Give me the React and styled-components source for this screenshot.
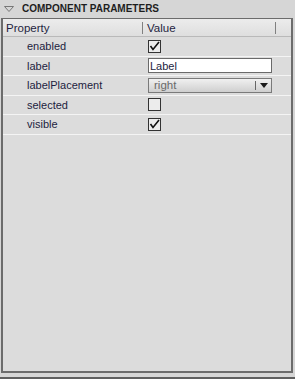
import React from "react";
import styled, { createGlobalStyle } from "styled-components";

const Global = createGlobalStyle`
  html, body {
    margin: 0;
    padding: 0;
    background: #d3d3d3;
  }
  body {
    font-family: "Liberation Sans", Arial, sans-serif;
  }
`;

const Frame = styled.div`
  width: 295px;
  height: 379px;
  box-sizing: border-box;
  background: #d6d6d6;
  border-bottom: 2px solid #5f5f5f;
  display: flex;
  flex-direction: column;
`;

const TitleBar = styled.div`
  height: 17px;
  display: flex;
  align-items: center;
  gap: 8px;
  padding-left: 4px;
  font-size: 10px;
  font-weight: bold;
  color: #1e1e1e;
`;

const Panel = styled.div`
  flex: 1;
  margin: 1px 2px 4px 1px;
  border: 2px solid #6c6c6c;
  border-top-width: 1px;
  background: #dcdcdc;
`;

const HeaderRow = styled.div`
  height: 17px;
  display: flex;
  align-items: center;
  background: linear-gradient(#ececec, #dedede);
  border-bottom: 1px solid #b9b9b9;
  font-size: 11.5px;
  color: #1f1f3f;
`;

const HeadCell = styled.div`
  width: ${(p) => p.$w}px;
  padding-left: ${(p) => p.$pad}px;
  box-sizing: border-box;
  display: flex;
  align-items: center;
  border-right: ${(p) => (p.$sep ? "1px solid #808080" : "none")};
  height: 12px;
`;

const Row = styled.div`
  height: 19.5px;
  box-sizing: border-box;
  display: flex;
  align-items: center;
  border-bottom: 1px solid #f4f4f4;
  font-size: 11px;
  color: #1d1d40;
`;

const Name = styled.div`
  width: 145px;
  padding-left: 24px;
  box-sizing: border-box;
`;

const Value = styled.div`
  flex: 1;
  padding-right: 19px;
  display: flex;
  align-items: center;
`;

const Check = styled.div`
  width: 11px;
  height: 11px;
  border: 1px solid #333;
  background: #ececec;
  display: flex;
  align-items: center;
  justify-content: center;
`;

const TextField = styled.div`
  flex: 1;
  height: 15px;
  box-sizing: border-box;
  border: 1px solid #6a6a6a;
  background: #fff;
  font-size: 11px;
  color: #1d1d40;
  padding-left: 1px;
  display: flex;
  align-items: center;
`;

const Dropdown = styled.div`
  flex: 1;
  height: 15px;
  box-sizing: border-box;
  border: 1px solid #7a7a7a;
  background: linear-gradient(#f0f0f0, #cfcfcf);
  font-size: 11.5px;
  color: #6a6a6a;
  display: flex;
  align-items: center;
  padding-left: 5px;
`;

const DropLabel = styled.span`
  flex: 1;
`;

const DropSep = styled.span`
  width: 1px;
  height: 9px;
  background: #666;
  margin-right: 4px;
`;

const Arrow = styled.span`
  width: 0;
  height: 0;
  border-left: 4px solid transparent;
  border-right: 4px solid transparent;
  border-top: 5px solid #1a1a1a;
  margin-right: 3px;
`;

const Tick = () => (
  <svg width="11" height="11" viewBox="0 0 11 11">
    <path d="M1.5 5 L4 8.5 L10 1" fill="none" stroke="#111" strokeWidth="1.6" />
  </svg>
);

const Collapse = () => (
  <svg width="10" height="8" viewBox="0 0 10 8">
    <path d="M0.5 1.5 L9.5 1.5 L5 6.5 Z" fill="none" stroke="#777" strokeWidth="1" />
  </svg>
);

const params = [
  { name: "enabled", kind: "check", on: true },
  { name: "label", kind: "text", value: "Label" },
  { name: "labelPlacement", kind: "select", value: "right" },
  { name: "selected", kind: "check", on: false },
  { name: "visible", kind: "check", on: true },
];

const renderValue = (p) => {
  if (p.kind === "check") return <Check>{p.on && <Tick />}</Check>;
  if (p.kind === "text") return <TextField>{p.value}</TextField>;
  return (
    <Dropdown>
      <DropLabel>{p.value}</DropLabel>
      <DropSep />
      <Arrow />
    </Dropdown>
  );
};

export default function App() {
  return (
    <>
      <Global />
      <Frame>
        <TitleBar>
          <Collapse />
          COMPONENT PARAMETERS
        </TitleBar>
        <Panel>
          <HeaderRow>
            <HeadCell $w={140} $pad={3} $sep>Property</HeadCell>
            <HeadCell $w={133} $pad={4} $sep>Value</HeadCell>
          </HeaderRow>
          {params.map((p) => (
            <Row key={p.name}>
              <Name>{p.name}</Name>
              <Value>{renderValue(p)}</Value>
            </Row>
          ))}
        </Panel>
      </Frame>
    </>
  );
}
